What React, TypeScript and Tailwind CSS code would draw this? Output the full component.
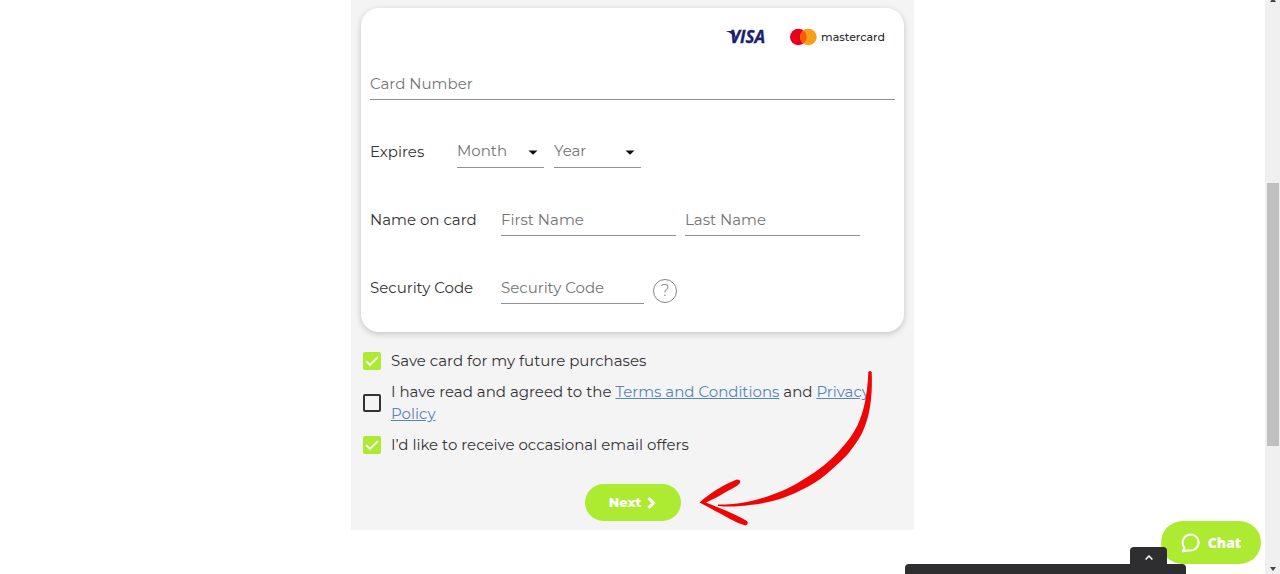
import { useState } from "react";
import type { ReactNode } from "react";

const fieldClass =
  "h-8 border-b border-[#8f8f93] bg-transparent text-[15px] text-[#757575] placeholder:text-[#757575] placeholder:opacity-100 outline-none";

function VisaLogo() {
  return (
    <svg role="img" aria-label="Visa" width="46" height="24" viewBox="0 0 46 24">
      <path d="M1.500 6H7.200C8.600 6 9.400 6.600 9.800 7.800L11.400 15.400C9.400 11.200 6.400 7.800 1.500 6.500Z" fill="#1a1f71" />
      <text
        x="5"
        y="18"
        fill="#1a1f71"
        stroke="#1a1f71"
        strokeWidth="0.300"
        fontFamily="'Open Sans', sans-serif"
        fontSize="17"
        fontStyle="italic"
        fontWeight="700"
      >
        VISA
      </text>
    </svg>
  );
}

function MastercardLogo() {
  return (
    <span className="flex items-center gap-1">
      <svg aria-hidden="true" width="28" height="18" viewBox="0 0 28 18">
        <circle cx="9.300" cy="9" r="8.300" fill="#e6001f" />
        <circle cx="19.400" cy="9" r="8.300" fill="#f79e1b" />
        <path d="M14.350 2.400a8.300 8.300 0 0 1 0 13.200a8.300 8.300 0 0 1 0-13.200Z" fill="#fb5b08" />
      </svg>
      <span className="text-[11px] leading-4 font-medium text-[#2b2b2f]">mastercard</span>
    </span>
  );
}

function Dropdown({ label, options }: { label: string; options: string[] }) {
  return (
    <span className="relative flex w-[87px]">
      <select aria-label={label} defaultValue="" className={`${fieldClass} w-full appearance-none`}>
        <option value="">{label}</option>
        {options.map((option) => (
          <option key={option}>{option}</option>
        ))}
      </select>
      <svg
        aria-hidden="true"
        className="pointer-events-none absolute top-3.5 right-1.5"
        width="10"
        height="5"
        viewBox="0 0 10 5"
      >
        <path d="M0.500 0.500H9.500L5 4.800Z" fill="#111" />
      </svg>
    </span>
  );
}

function CheckRow({ id, initial, children }: { id: string; initial: boolean; children: ReactNode }) {
  const [checked, setChecked] = useState(initial);
  return (
    <div className="flex items-center gap-2.5">
      <span className="relative flex size-[18px] shrink-0">
        <input
          id={id}
          type="checkbox"
          checked={checked}
          onChange={(event) => setChecked(event.target.checked)}
          className="size-[18px] appearance-none rounded-xs border-2 border-[#333] checked:border-[#adeb33] checked:bg-[#adeb33]"
        />
        {checked && (
          <svg
            aria-hidden="true"
            className="pointer-events-none absolute inset-0"
            width="18"
            height="18"
            viewBox="0 0 18 18"
            fill="none"
            stroke="#fff"
            strokeWidth="1.800"
          >
            <path d="M3.200 9.200L7 13L14.800 5.200" />
          </svg>
        )}
      </span>
      <label htmlFor={id} className="leading-[22px]">
        {children}
      </label>
    </div>
  );
}

function PointerArrow() {
  return (
    <svg
      aria-hidden="true"
      className="pointer-events-none absolute right-[41px] bottom-1"
      width="174"
      height="157"
      viewBox="0 0 174 157"
      fill="#ee0606"
    >
      <path d="M169.300 3Q171 1 172.700 3C173.500 22 172 42 166 57C163 66 158 73 152.700 80C148 87 142 92 136 97.500C130 103 123 109 116 113.500C107 119 98 123.500 87.700 127.500C76 132 64 134.500 51 136C40 137.500 29 138 19.300 137Q18.500 136 19.300 135.500C29 135.500 38 135 47.700 133C58 131 68 128 77.700 124C87 120.500 96 116 104.300 110.500C112 106 119 101 126 95.500C132 90 138 85 142.700 79C149 72 154 65 158.300 56.700C165 43 168.500 25 169.300 3Z" />
      <path d="M0.500 133.500C11 124 24 116 37.700 110.500Q42 110.500 41 114C38 117.500 33 119.500 27.700 122.500C21 126.500 14 130.500 7 133.500C21 139 36 145 48 152Q50 155 46.500 156.500Q39 154.500 31 150C20 144 11 139 0.500 133.500Z" />
    </svg>
  );
}

function ScrollTrack() {
  return (
    <div aria-hidden="true" className="flex w-[15px] shrink-0 flex-col items-center bg-[#f1f0f1] pb-[3px]">
      <svg width="8" height="3" viewBox="0 0 8 3">
        <path d="M2.500 0H5.500L7 2H1Z" fill="#444" />
      </svg>
      <div className="grow-[180]" />
      <div className="w-3 grow-[262] bg-[#c1c0c1]" />
      <div className="grow-[121]" />
      <svg width="6" height="4" viewBox="0 0 6 4">
        <path d="M0 0H6L3 4Z" fill="#444" />
      </svg>
    </div>
  );
}

export default function App() {
  return (
    <div className="flex min-h-screen bg-white font-['Montserrat','Inter',sans-serif] text-[15px] font-normal text-[#333336]">
      <main className="min-w-0 flex-1">
        <form
          className="relative mx-auto max-w-[563px] bg-[#f5f4f5] px-2.5 pt-2 pb-[9px]"
          onSubmit={(event) => event.preventDefault()}
        >
          <section className="rounded-[18px] bg-white px-[9px] pt-[17px] pb-7 shadow-[0_2px_6px_rgba(0,0,0,0.2)]">
            <div className="flex items-center justify-end gap-[18px] pr-2.5">
              <VisaLogo />
              <MastercardLogo />
            </div>
            <div className="flex flex-col gap-9 pt-[19px]">
              <input aria-label="Card Number" placeholder="Card Number" className={`${fieldClass} w-full`} />
              <div className="flex items-center">
                <span className="w-[87px]">Expires</span>
                <div className="flex gap-2.5">
                  <Dropdown label="Month" options={["01", "02", "03", "04", "05", "06", "07", "08", "09", "10", "11", "12"]} />
                  <Dropdown label="Year" options={["2024", "2025", "2026", "2027", "2028"]} />
                </div>
              </div>
              <div className="flex items-center">
                <label htmlFor="first-name" className="w-[131px] shrink-0">
                  Name on card
                </label>
                <div className="flex min-w-0 gap-[9px]">
                  <input id="first-name" placeholder="First Name" className={`${fieldClass} w-[175px] min-w-0`} />
                  <input aria-label="Last Name" placeholder="Last Name" className={`${fieldClass} w-[175px] min-w-0`} />
                </div>
              </div>
              <div className="flex items-center">
                <label htmlFor="security-code" className="w-[131px] shrink-0">
                  Security Code
                </label>
                <div className="flex items-center gap-[9px]">
                  <input id="security-code" placeholder="Security Code" className={`${fieldClass} w-[143px]`} />
                  <button
                    type="button"
                    aria-label="About the security code"
                    className="mt-1.5 flex size-6 items-center justify-center rounded-full border border-[#858589] text-base leading-none font-light text-[#858589]"
                  >
                    ?
                  </button>
                </div>
              </div>
            </div>
          </section>

          <div className="flex flex-col gap-[9px] px-0.5 pt-[18px] pr-8">
            <CheckRow id="save-card" initial={true}>
              Save card for my future purchases
            </CheckRow>
            <CheckRow id="terms" initial={false}>
              I have read and agreed to the{" "}
              <a href="#terms" className="text-[#5586b5] underline">
                Terms and Conditions
              </a>{" "}
              and{" "}
              <a href="#privacy" className="text-[#5586b5] underline">
                Privacy Policy
              </a>
            </CheckRow>
            <CheckRow id="offers" initial={true}>
              I’d like to receive occasional email offers
            </CheckRow>
          </div>

          <div className="flex justify-center pt-7">
            <button
              type="submit"
              className="flex h-[37px] w-24 items-center justify-center gap-1.5 rounded-full bg-[#adeb33] text-[13px] font-extrabold text-white"
            >
              Next
              <svg aria-hidden="true" width="9" height="12" viewBox="0 0 9 12" fill="none" stroke="#fff" strokeWidth="3">
                <path d="M1.500 1.200L6.500 6L1.500 10.800" />
              </svg>
            </button>
          </div>
          <PointerArrow />
        </form>
      </main>

      <ScrollTrack />

      <button
        type="button"
        className="fixed right-[19px] bottom-2.5 flex h-[43px] w-[100px] items-center justify-center gap-2 rounded-full bg-[#adeb33] font-['Open_Sans',sans-serif] text-sm font-extrabold text-white"
      >
        <svg
          aria-hidden="true"
          width="19"
          height="20"
          viewBox="0 0 19 20"
          fill="none"
          stroke="#fff"
          strokeWidth="2"
          strokeLinejoin="round"
        >
          <path d="M3.600 14.800A8 8 0 1 1 7.400 17.200L1.600 18.400Z" />
        </svg>
        Chat
      </button>
      <div className="fixed right-[94px] bottom-0 flex w-[281px] flex-col items-end">
        <button
          type="button"
          aria-label="Expand panel"
          className="mr-[19px] flex h-[17px] w-[37px] items-center justify-center rounded-t bg-[#2e2d30] pt-1"
        >
          <svg aria-hidden="true" width="8" height="5" viewBox="0 0 8 5" fill="none" stroke="#fff" strokeWidth="1.500">
            <path d="M0.600 4.500L4 1L7.400 4.500" />
          </svg>
        </button>
        <div className="h-2.5 w-full rounded-t bg-[#2e2d30]" />
      </div>
    </div>
  );
}
